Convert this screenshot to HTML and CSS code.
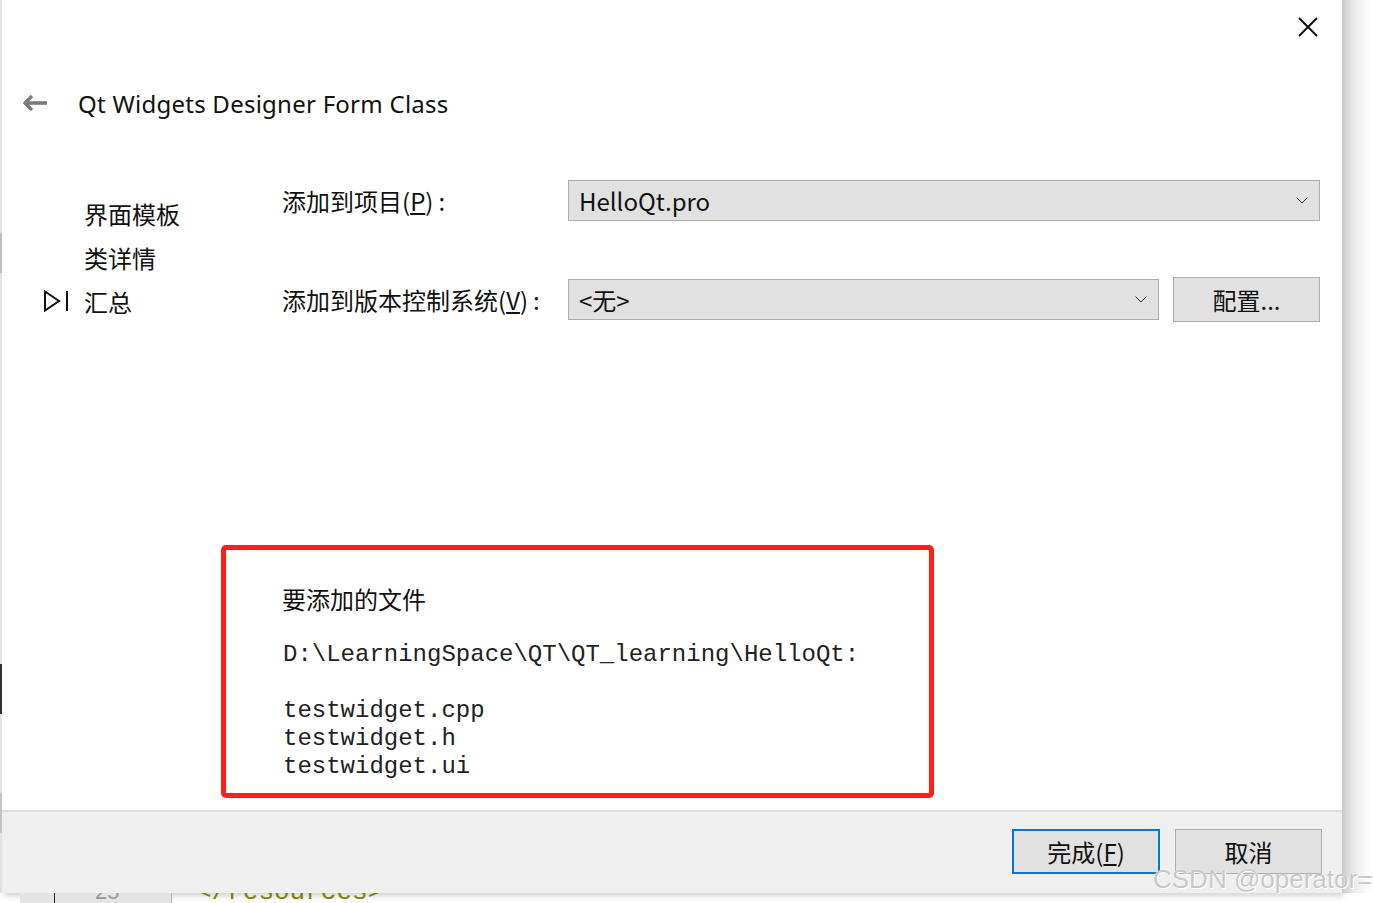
FILE: index.html
```html
<!DOCTYPE html>
<html lang="zh-CN">
<head>
    <meta charset="UTF-8">
    <title>Qt Widgets Designer Form Class</title>
    <link rel="stylesheet" href="styles.css">
</head>
<body>
    <div class="screen">
        <div class="desk">
            <div class="edge">
                <span class="edge-mark mark-a"></span>
                <span class="edge-mark mark-b"></span>
                <span class="edge-mark mark-c"></span>
            </div>
            <div class="dialog">
                <div class="top">
                    <button class="close" title="关闭">
                        <svg width="20" height="20" viewBox="0 0 20 20">
                            <path d="M1 1 L19 19 M19 1 L1 19" stroke="#111" stroke-width="2" fill="none"/>
                        </svg>
                    </button>
                </div>
                <div class="title-row">
                    <svg class="back" width="26" height="20" viewBox="0 0 26 20">
                        <path d="M10 3 L3 10 L10 17" stroke="#7b7b7b" stroke-width="3.4" fill="none"/>
                        <path d="M4 10 H25" stroke="#7b7b7b" stroke-width="3.6"/>
                    </svg>
                    <h1 class="title">Qt Widgets Designer Form Class</h1>
                </div>

                <div class="content">
                    <ul class="steps">
                        <li><span class="step-mark"></span>界面模板</li>
                        <li><span class="step-mark"></span>类详情</li>
                        <li class="current">
                            <span class="step-mark">
                                <svg width="26" height="22" viewBox="0 0 26 22">
                                    <path d="M2 1.5 L16 11 L2 20.5 Z" stroke="#111" stroke-width="2" fill="none"/>
                                    <path d="M24 1 V21" stroke="#111" stroke-width="2"/>
                                </svg>
                            </span>汇总
                        </li>
                    </ul>

                    <div class="form">
                        <label class="field-label">添加到项目(<u>P</u>)<span class="colon">:</span></label>
                        <div class="combo wide">
                            <span>HelloQt.pro</span>
                            <svg class="chevron" width="12" height="7" viewBox="0 0 12 7"><path d="M0.5 0.5 L6 6 L11.5 0.5" stroke="#333" fill="none"/></svg>
                        </div>

                        <label class="field-label">添加到版本控制系统(<u>V</u>)<span class="colon">:</span></label>
                        <div class="combo">
                            <span>&lt;无&gt;</span>
                            <svg class="chevron" width="12" height="7" viewBox="0 0 12 7"><path d="M0.5 0.5 L6 6 L11.5 0.5" stroke="#333" fill="none"/></svg>
                        </div>
                        <button class="btn tall">配置...</button>
                    </div>
                </div>

                <div class="files">
                    <h2 class="files-title">要添加的文件</h2>
<pre class="files-list">D:\LearningSpace\QT\QT_learning\HelloQt:

testwidget.cpp
testwidget.h
testwidget.ui</pre>
                </div>

                <div class="footer">
                    <button class="btn primary">完成(<u>F</u>)</button>
                    <button class="btn">取消</button>
                </div>
            </div>
            <div class="shade"></div>
        </div>

        <div class="editor">
            <span class="gutter"><span class="gutter-line"></span><span class="line-no">25</span></span>
            <span class="code">&lt;/resources&gt;</span>
        </div>

        <div class="watermark">CSDN @operator=</div>
    </div>
</body>
</html>
```
FILE: styles.css
```css
* {
    box-sizing: border-box;
}
body {
    margin: 0;
    background: #fff;
    font-family: "Noto Sans CJK SC", "Noto Sans", sans-serif;
    color: #111;
}
.screen {
    position: relative;
    width: 1373px;
    height: 903px;
    overflow: hidden;
    background: #fff;
}
.desk {
    display: flex;
    height: 893px;
}
.edge {
    position: relative;
    width: 2px;
    background: #e2e2e2;
}
.edge-mark {
    position: absolute;
    left: 0;
    width: 2px;
}
.mark-a { top: 233px; height: 40px; background: #bdbdbd; }
.mark-b { top: 664px; height: 50px; background: #333; }
.mark-c { top: 793px; height: 40px; background: #c4c4c4; }

.dialog {
    width: 1340px;
    height: 893px;
    display: flex;
    flex-direction: column;
    background: #fff;
    box-shadow: 2px 3px 6px rgba(0,0,0,0.18);
}
.shade {
    width: 31px;
    background: linear-gradient(90deg, #c9c9c9 0%, #e8e8e8 35%, #fbfbfb 80%, #fff 100%);
}

.top {
    display: flex;
    justify-content: flex-end;
    padding: 17px 24px 0 0;
    height: 37px;
}
.close {
    border: none;
    background: none;
    padding: 0;
    width: 20px;
    height: 20px;
    cursor: pointer;
}
.title-row {
    display: flex;
    align-items: center;
    height: 40px;
    margin-top: 46px;
    padding-left: 20px;
}
.back {
    margin-right: 30px;
}
.title {
    margin: 0;
    font-family: "Noto Sans", "Open Sans", sans-serif;
    font-weight: 400;
    font-size: 24px;
    letter-spacing: 0.25px;
    color: #111;
}

.content {
    display: flex;
    margin-top: 57px;
}
.steps {
    list-style: none;
    margin: 0;
    padding: 11px 0 0 41px;
    width: 280px;
}
.steps li {
    display: flex;
    align-items: center;
    height: 44px;
    font-size: 24px;
}
.step-mark {
    display: flex;
    align-items: center;
    width: 41px;
}

.form {
    display: grid;
    grid-template-columns: 272px 591px 147px;
    grid-template-rows: 41px 45px;
    column-gap: 14px;
    row-gap: 56px;
    align-items: center;
}
.field-label {
    font-size: 24px;
}
.colon {
    margin-left: 5px;
}
.combo {
    display: flex;
    align-items: center;
    justify-content: space-between;
    height: 41px;
    padding: 0 11px 0 10px;
    background: #e1e1e1;
    border: 1px solid #adadad;
    font-size: 24px;
}
.combo.wide {
    grid-column: 2 / 4;
}
.chevron {
    flex: none;
}
.btn {
    height: 45px;
    width: 147px;
    background: #e1e1e1;
    border: 1px solid #adadad;
    font-family: "Noto Sans CJK SC", sans-serif;
    font-size: 24px;
    color: #111;
    padding: 0;
}
.btn.primary {
    border: 2px solid #0078d7;
    width: 148px;
}

.files {
    margin: 222px 0 0 219px;
    width: 713px;
    height: 253px;
    border: 5px solid #ff1f14;
    border-radius: 5px;
    padding: 33px 0 0 56px;
}
.files-title {
    margin: 0;
    height: 32px;
    line-height: 32px;
    font-size: 24px;
    font-weight: 400;
}
.files-list {
    margin: 26px 0 0 1px;
    font-family: "Liberation Mono", "Courier New", monospace;
    font-size: 24px;
    line-height: 28px;
    color: #222;
}

.footer {
    margin-top: auto;
    height: 83px;
    background: #efefef;
    border-top: 2px solid #dedede;
    display: flex;
    justify-content: flex-end;
    gap: 15px;
    padding: 17px 20px 0 0;
}

.editor {
    display: flex;
    height: 10px;
    overflow: hidden;
    padding-left: 20px;
}
.gutter {
    position: relative;
    display: flex;
    width: 152px;
    background: #e4e4e4;
    border-right: 1px solid #b0b0b0;
}
.gutter-line {
    width: 1px;
    margin-left: 34px;
    background: #222;
}
.line-no {
    margin: -14px 0 0 40px;
    font-family: "Liberation Sans", sans-serif;
    font-size: 22px;
    color: #999;
}
.code {
    margin: -16px 0 0 24px;
    font-family: "Liberation Mono", monospace;
    font-size: 26px;
    color: #808000;
}

.watermark {
    position: absolute;
    left: 1153px;
    top: 864px;
    font-family: "Liberation Sans", Arial, sans-serif;
    font-size: 26px;
    color: #c8c8c8;
    text-shadow: 0 0 1px #fff, 1px 1px 0 #fff;
    white-space: nowrap;
}
```
